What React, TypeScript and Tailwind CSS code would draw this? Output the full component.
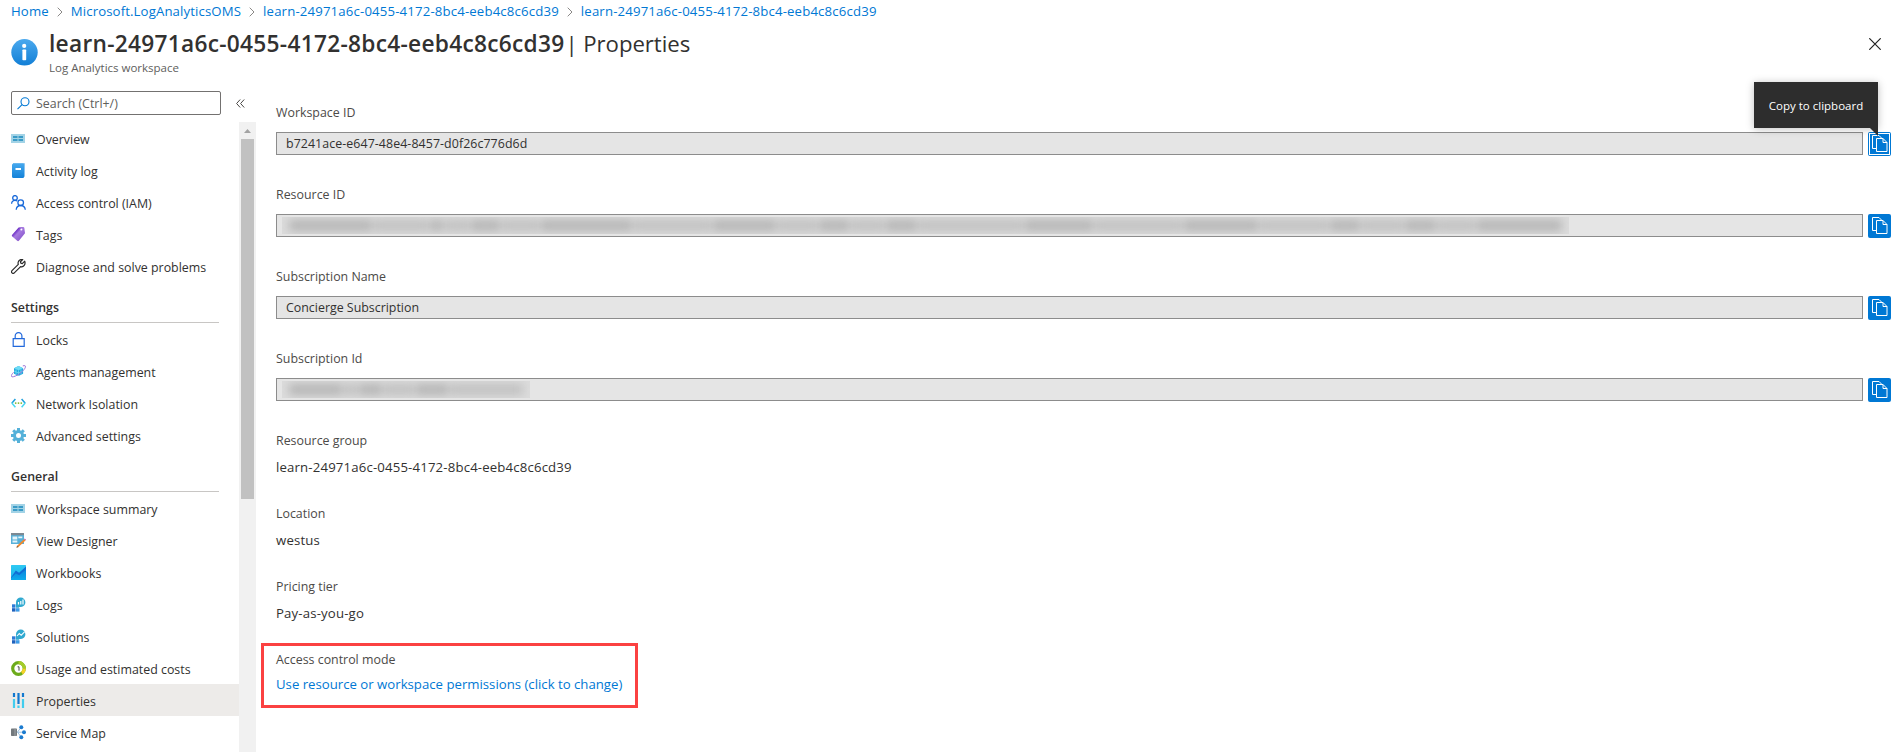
import React from "react";

type IconProps = { children: React.ReactNode };

function Icon({ children }: IconProps) {
  return (
    <svg width="15" height="15" viewBox="0 0 15 15" fill="none" className="mt-px block shrink-0">
      {children}
    </svg>
  );
}

const OverviewIcon = () => (
  <Icon>
    <rect x="0" y="3" width="14" height="9" fill="#a3d3e6" />
    <path d="M2 5h4.500v2H2zM7.500 5H12v2H7.500zM2 8h4.500v2H2zM7.500 8H12v2H7.500z" fill="#3a9bc7" />
  </Icon>
);

const ActivityIcon = () => (
  <Icon>
    <path d="M2 0h11a1 1 0 0 1 1 1v12a1 1 0 0 1-1 1H2z" fill="#8cc4ee" />
    <path d="M2.500 0.500H12a1 1 0 0 1 1 1V14a1 1 0 0 1-1 1H2.500A1.500 1.500 0 0 1 1 13.500V2A1.500 1.500 0 0 1 2.500 0.500z" fill="url(#book)" />
    <rect x="4.500" y="5" width="5.500" height="2" fill="#fff" />
    <defs>
      <linearGradient id="book" x1="0" y1="0" x2="0" y2="1">
        <stop stopColor="#45a8ee" />
        <stop offset="1" stopColor="#1482d8" />
      </linearGradient>
    </defs>
  </Icon>
);

const AccessIcon = () => (
  <Icon>
    <g stroke="#1768d9" strokeWidth="1.300">
      <circle cx="4" cy="2.900" r="2.300" />
      <path d="M0.600 8.800C0.700 6.600 2.100 5.300 4 5.300c1 0 1.700.3 2.300.8" />
      <circle cx="9.700" cy="7.700" r="2.800" />
      <path d="M5.200 14.800c.2-2.600 2-4.300 4.500-4.300s4.300 1.700 4.600 4.300" />
    </g>
  </Icon>
);

const TagIcon = () => (
  <Icon>
    <path d="M7.600 0.500L12 0a1.300 1.300 0 0 1 1.300.8L14 6.300 7.900 13.700a1.200 1.200 0 0 1-1.700.1L1.300 9.400a1.200 1.200 0 0 1-.1-1.700z" fill="url(#tag)" />
    <circle cx="10.400" cy="2.500" r="1" fill="#fff" />
    <defs>
      <linearGradient id="tag" x1="0" y1="0" x2="1" y2="1">
        <stop offset=".3" stopColor="#7337c8" />
        <stop offset=".45" stopColor="#a77ae0" />
        <stop offset="1" stopColor="#7a48c4" />
      </linearGradient>
    </defs>
  </Icon>
);

const WrenchIcon = () => (
  <Icon>
    <path
      d="M13.700 2.200l-2.400 2.400-1.500-.4-.4-1.500L11.700.5C9.700.1 7.400 1.300 7.100 3.500c-.1.700 0 1.200.2 1.800L1 11.600c-1.500 1.600.8 3.900 2.300 2.300l6.300-6.300c3 .9 5.300-2.200 4.100-5.400z"
      stroke="#2a2a2a"
      strokeWidth="1.200"
      strokeLinejoin="round"
    />
  </Icon>
);

const LockIcon = () => (
  <Icon>
    <path d="M2.200 6.600h11v7.700h-11zM4.200 6.500V4A3.200 3.200 0 0 1 7.500.7 3.200 3.200 0 0 1 10.900 4v2.500" stroke="#2269dc" strokeWidth="1.200" />
  </Icon>
);

const AgentsIcon = () => (
  <Icon>
    <path d="M7.500 2l4.600 2.200v5.500L7.500 12 3 9.700V4.200z" fill="#22a9dc" />
    <path d="M7.500 2l4.600 2.200L7.500 6.300 3 4.200z" fill="#6fdcf5" />
    <path d="M5 5.200v5.600M10 5.200v5.600M7.500 6.300V12M3 7l4.500 2 4.600-2" stroke="#8ce6fa" strokeWidth=".6" />
    <path d="M11.800 1.900c2-.5 2.900-.2 2.700.8-.2 2-3.500 5.500-7.500 8-3.400 2-6.300 2.800-6.600 1.600-.3-.8.500-2.200 2.100-3.900" stroke="#9a70d6" strokeWidth="1" />
  </Icon>
);

const NetworkIcon = () => (
  <Icon>
    <path d="M4.400 3L.8 7.200M10.600 3l3.600 4.200" stroke="#20a0dc" strokeWidth="1.500" />
    <path d="M.8 7l3.600 4.200M14.200 7l-3.600 4.200" stroke="#4ad8f0" strokeWidth="1.500" />
    <g fill="#7fb82e">
      <circle cx="4.700" cy="7.100" r=".9" />
      <circle cx="7.500" cy="7.100" r=".9" />
      <circle cx="10.300" cy="7.100" r=".9" />
    </g>
  </Icon>
);

const GearIcon = () => (
  <Icon>
    <g stroke="#55b1d9" strokeWidth="3">
      <path d="M7.500 0v3M7.500 12v3M0 7.500h3M12 7.500h3M2.200 2.200l2 2M10.800 10.800l2 2M2.200 12.800l2-2M10.800 4.200l2-2" />
      <circle cx="7.500" cy="7.500" r="4" />
    </g>
  </Icon>
);

const DesignerIcon = () => (
  <Icon>
    <rect x="0" y="0" width="13" height="11" fill="#58b0d8" />
    <rect x="0" y="0" width="13" height="2.200" fill="#7d8a94" />
    <path d="M1.500 3.500h4.800v3H1.500zM7.300 3.500h4v1.800h-4zM1.500 7.500h4.800v2H1.500z" fill="#e5f4fa" />
    <path d="M13 6.200l1.500 1.300-7 6.500-2 .7.600-2z" fill="#f0882d" />
    <path d="M13 6.200l.8-.8 1.200 1.300-.6.800z" fill="#b857a8" />
    <path d="M5.500 14.700l.6-2 1.400 1.300z" fill="#6b6155" />
  </Icon>
);

const WorkbooksIcon = () => (
  <Icon>
    <rect width="15" height="15" rx=".5" fill="url(#wbTop)" />
    <path d="M0 12.500l4.800-7 3.300 2.300L15 1.500V15H0z" fill="#0f6ed4" />
    <path d="M0 13l4.800-4.500 3.400 1.800L15 4.500V15H0z" fill="url(#wbFront)" />
    <defs>
      <linearGradient id="wbTop" x1="0" y1="0" x2="0" y2="1">
        <stop stopColor="#2fc9f3" />
        <stop offset="1" stopColor="#18b4ea" />
      </linearGradient>
      <linearGradient id="wbFront" x1="0" y1="0" x2="0" y2="1">
        <stop stopColor="#0c84dc" />
        <stop offset="1" stopColor="#0cacec" />
      </linearGradient>
    </defs>
  </Icon>
);

function InsightsIcon({ line }: { line?: boolean }) {
  return (
    <Icon>
      <path d="M1 7.300h3.500v3.400H1z" fill="#2f7bd6" />
      <path d="M1 11.200h3.500v3.400H1z" fill="#1f62bd" />
      <path d="M5 11.200h3.500v3.400H5z" fill="#3c9be8" />
      <path d="M5 10.700V5a4.700 4.700 0 1 1 5 5H8.500l-.7.700z" fill="#2fa9d0" />
      {line ? (
        <path d="M6 7l2.300-2.500 1.900 1.800 3.300-3.500" stroke="#fff" strokeWidth="1.100" />
      ) : (
        <path d="M7.500 7.500V5M9.800 7.500V4M12 7.500V2.500" stroke="#fff" strokeWidth="1.200" />
      )}
    </Icon>
  );
}

const UsageIcon = () => (
  <Icon>
    <circle cx="7.500" cy="7.500" r="5.800" stroke="#6cab1c" strokeWidth="3.200" />
    <path d="M7.500 1.700a5.800 5.800 0 0 1 5.800 5.800" stroke="#a5cc2a" strokeWidth="3.200" />
    <path d="M13.300 7.500a5.800 5.800 0 0 1-2.300 4.600" stroke="#f5d228" strokeWidth="3.200" />
    <path d="M6.600 5.800h1.400v3.900" stroke="#444" strokeWidth="1" />
  </Icon>
);

const PropertiesIcon = () => (
  <Icon>
    <path d="M3 0v4M12 0v4M7.500 0v11" stroke="#1278cf" strokeWidth="2.200" />
    <path d="M3 6v9M12 6v9M7.500 12.500V15" stroke="#42cdee" strokeWidth="2.200" />
  </Icon>
);

const ServiceMapIcon = () => (
  <Icon>
    <rect x="0" y="3.500" width="6" height="7.500" rx=".7" fill="#73797d" />
    <path d="M4 3.500v7.500" stroke="#9ea3a6" />
    <path d="M10 2.500L6.500 7l3.500 5M6.500 7.200H13" stroke="#8eb9dc" strokeWidth=".9" />
    <g fill="#1c7bcf">
      <circle cx="10.300" cy="2.300" r="2" />
      <circle cx="13" cy="7.200" r="2" />
      <circle cx="10.300" cy="12.300" r="2" />
    </g>
  </Icon>
);

type Item = { label: string; icon: React.ReactNode; active?: boolean };

const topItems: Item[] = [
  { label: "Overview", icon: <OverviewIcon /> },
  { label: "Activity log", icon: <ActivityIcon /> },
  { label: "Access control (IAM)", icon: <AccessIcon /> },
  { label: "Tags", icon: <TagIcon /> },
  { label: "Diagnose and solve problems", icon: <WrenchIcon /> },
];

const settingsItems: Item[] = [
  { label: "Locks", icon: <LockIcon /> },
  { label: "Agents management", icon: <AgentsIcon /> },
  { label: "Network Isolation", icon: <NetworkIcon /> },
  { label: "Advanced settings", icon: <GearIcon /> },
];

const generalItems: Item[] = [
  { label: "Workspace summary", icon: <OverviewIcon /> },
  { label: "View Designer", icon: <DesignerIcon /> },
  { label: "Workbooks", icon: <WorkbooksIcon /> },
  { label: "Logs", icon: <InsightsIcon /> },
  { label: "Solutions", icon: <InsightsIcon line /> },
  { label: "Usage and estimated costs", icon: <UsageIcon /> },
  { label: "Properties", icon: <PropertiesIcon />, active: true },
  { label: "Service Map", icon: <ServiceMapIcon /> },
];

function MenuList({ items }: { items: Item[] }) {
  return (
    <ul>
      {items.map((item) => (
        <li
          key={item.label}
          className={`flex h-8 items-center gap-[10px] pl-[11px] ${item.active ? "bg-[#edebe9]" : ""}`}
        >
          {item.icon}
          <span className="pt-1 whitespace-nowrap">{item.label}</span>
        </li>
      ))}
    </ul>
  );
}

function SectionHeader({ title }: { title: string }) {
  return (
    <h2 className="mr-5 ml-[11px] flex h-[41px] items-center border-b border-[#c8c6c4] pt-3 font-semibold">
      {title}
    </h2>
  );
}

function Chevron() {
  return (
    <svg width="6" height="10" viewBox="0 0 6 10" fill="none" className="mx-2 shrink-0">
      <path d="M.7.7L5 5 .7 9.300" stroke="#8a8886" />
    </svg>
  );
}

function CopyButton({ focused }: { focused?: boolean }) {
  return (
    <button className="flex h-6 w-[23px] shrink-0 rounded-[2px] bg-[#0078d4] p-px">
      <span
        className={`flex h-full w-full items-start border pt-px pl-[2px] ${focused ? "border-white" : "border-transparent"}`}
      >
        <svg width="16" height="17" viewBox="0 0 16 17" fill="none" stroke="#fff">
          <path d="M4.500 13.500h-4v-13h6.500l3 3" />
          <path d="M4.500 3.500h6.500l4 4v9H4.500z" fill="#0078d4" />
          <path d="M11 3.500v4h4" />
        </svg>
      </span>
    </button>
  );
}

function Redacted({ words, wide }: { words: number[]; wide?: boolean }) {
  return (
    <div
      className={`ml-[5px] flex h-[17px] items-center overflow-hidden bg-[#dcdcdc] px-[7px] ${wide ? "w-[1287px]" : "w-[248px]"}`}
      aria-hidden="true"
    >
      <div className="flex h-[11px] grow gap-[2px] blur-[5px]">
        {words.map((w, i) => (
          <span key={i} className={i % 2 ? "bg-[#c0c0c0]" : "bg-[#b4b4b4]"} style={{ flexGrow: w }} />
        ))}
      </div>
    </div>
  );
}

function Field({ label, children, focused }: { label: string; children: React.ReactNode; focused?: boolean }) {
  return (
    <div className="h-[82px]">
      <div className="flex h-[30px] items-start pt-px leading-[20px] text-[#4c4a48]">{label}</div>
      <div className="flex gap-[5px]">
        <div className="flex h-[23px] w-[1587px] items-center border border-[#8c8c8c] bg-[#e5e5e5]">{children}</div>
        <CopyButton focused={focused} />
      </div>
    </div>
  );
}

function Detail({ label, value }: { label: string; value: string }) {
  return (
    <div className="h-[73px] leading-[20px]">
      <div className="text-[#4c4a48]">{label}</div>
      <div className="mt-[6px] text-[13.200px] tracking-[0.16px]">{value}</div>
    </div>
  );
}

const guid = "learn-24971a6c-0455-4172-8bc4-eeb4c8c6cd39";

export default function App() {
  return (
    <div className="flex h-[752px] w-[1903px] flex-col overflow-hidden bg-white font-['Open_Sans','Noto_Sans',sans-serif] text-[12.400px] text-[#323130]">
      <nav className="flex h-[23px] items-center pl-[11px] text-[13.200px] tracking-[0.12px] whitespace-nowrap text-[#0078d4]">
        <a className="pt-px">Home</a>
        <Chevron />
        <a className="pt-px">Microsoft.LogAnalyticsOMS</a>
        <Chevron />
        <a className="pt-px tracking-[0.16px]">{guid}</a>
        <Chevron />
        <a className="pt-px tracking-[0.16px]">{guid}</a>
      </nav>

      <header className="flex h-[61px] items-start pl-[11px]">
        <svg width="27" height="27" viewBox="0 0 27 27" className="mt-4 shrink-0">
          <defs>
            <linearGradient id="info" x1="0" y1="0" x2="0" y2="1">
              <stop stopColor="#4ba9ee" />
              <stop offset="1" stopColor="#127fd6" />
            </linearGradient>
          </defs>
          <circle cx="13.500" cy="13.300" r="13.200" fill="url(#info)" />
          <circle cx="13.200" cy="6.900" r="2.100" fill="#fff" />
          <rect x="11.400" y="10.500" width="3.800" height="10.700" rx=".8" fill="#fff" />
        </svg>
        <div className="ml-[11px] grow">
          <h1 className="flex h-[37px] items-center pt-[5px] text-[22.700px] whitespace-nowrap">
            <span className="font-semibold tracking-[0.28px]">{guid}</span>
            <span className="ml-px text-[22.200px] tracking-[-0.05px]">| Properties</span>
          </h1>
          <div className="text-[11.500px] leading-[15px] text-[#605e5c]">Log Analytics workspace</div>
        </div>
        <svg width="12" height="12" viewBox="0 0 12 12" className="mt-[15px] mr-[22px]">
          <path d="M.3.3l11.400 11.400M11.700.3L.3 11.700" stroke="#222" strokeWidth="1.200" />
        </svg>
      </header>

      <div className="flex grow">
        <aside className="flex w-[256px] shrink-0 flex-col">
          <div className="flex h-[38px] items-start pt-[7px] pl-[11px]">
            <div className="flex h-6 w-[210px] items-center rounded-[2px] border border-[#737170] pl-[5px] text-[#605e5c]">
              <svg width="13" height="13" viewBox="0 0 13 13" fill="none" stroke="#0078d4" strokeWidth="1.100">
                <circle cx="8" cy="4.700" r="4" />
                <path d="M5.100 7.600L.5 12.200" />
              </svg>
              <span className="pt-[2px] pl-[6px]">Search (Ctrl+/)</span>
            </div>
            <svg width="9" height="9" viewBox="0 0 9 9" fill="none" stroke="#4a4846" className="mt-[8px] ml-[15px]">
              <path d="M4.200.5l-3.600 4 3.600 4M8.200.5l-3.600 4 3.600 4" />
            </svg>
          </div>
          <div className="flex grow">
            <div className="w-[239px]">
              <MenuList items={topItems} />
              <SectionHeader title="Settings" />
              <MenuList items={settingsItems} />
              <SectionHeader title="General" />
              <MenuList items={generalItems} />
            </div>
            <div className="flex w-[17px] flex-col items-center bg-[#f1f1f1]">
              <svg width="17" height="17" viewBox="0 0 17 17">
                <path d="M5 11l3.500-4 3.500 4z" fill="#a3a3a3" />
              </svg>
              <div className="h-[360px] w-[13px] bg-[#c1c1c1]" />
            </div>
          </div>
        </aside>

        <main className="pt-[18px] pl-5">
          <Field label="Workspace ID" focused>
            <span className="pt-[2px] pl-[9px] tracking-[0.07px]">b7241ace-e647-48e4-8457-d0f26c776d6d</span>
          </Field>
          <Field label="Resource ID">
            <Redacted
              wide
              words={[76, 50, 12, 22, 26, 34, 84, 70, 58, 36, 28, 30, 28, 96, 62, 80, 68, 62, 28, 38, 28, 34, 78]}
            />
          </Field>
          <Field label="Subscription Name">
            <span className="pt-[2px] pl-[9px]">Concierge Subscription</span>
          </Field>
          <Field label="Subscription Id">
            <Redacted words={[50, 12, 22, 28, 30, 69]} />
          </Field>
          <div className="pt-px">
            <Detail label="Resource group" value={guid} />
            <Detail label="Location" value="westus" />
            <Detail label="Pricing tier" value="Pay-as-you-go" />
          </div>
          <section className="-mt-[7px] -ml-[15px] h-[65px] w-[377px] border-3 border-[#fb4141] pt-[4px] pl-3 leading-[20px]">
            <div className="text-[#4c4a48]">Access control mode</div>
            <a className="mt-[4px] block text-[13.200px] whitespace-nowrap text-[#0078d4]">
              Use resource or workspace permissions (click to change)
            </a>
          </section>
        </main>
      </div>

      <div
        role="tooltip"
        className="absolute top-[82px] left-[1754px] flex h-[46px] w-[124px] items-center justify-center bg-[#2d2d2d] pt-[2px] text-[11.500px] whitespace-nowrap text-white shadow-[0_1px_8px_rgba(0,0,0,0.25)]"
      >
        Copy to clipboard
        <svg width="8" height="8" viewBox="0 0 8 8" className="absolute top-full right-0">
          <path d="M0 0h8v8z" fill="#2d2d2d" />
        </svg>
      </div>
    </div>
  );
}
